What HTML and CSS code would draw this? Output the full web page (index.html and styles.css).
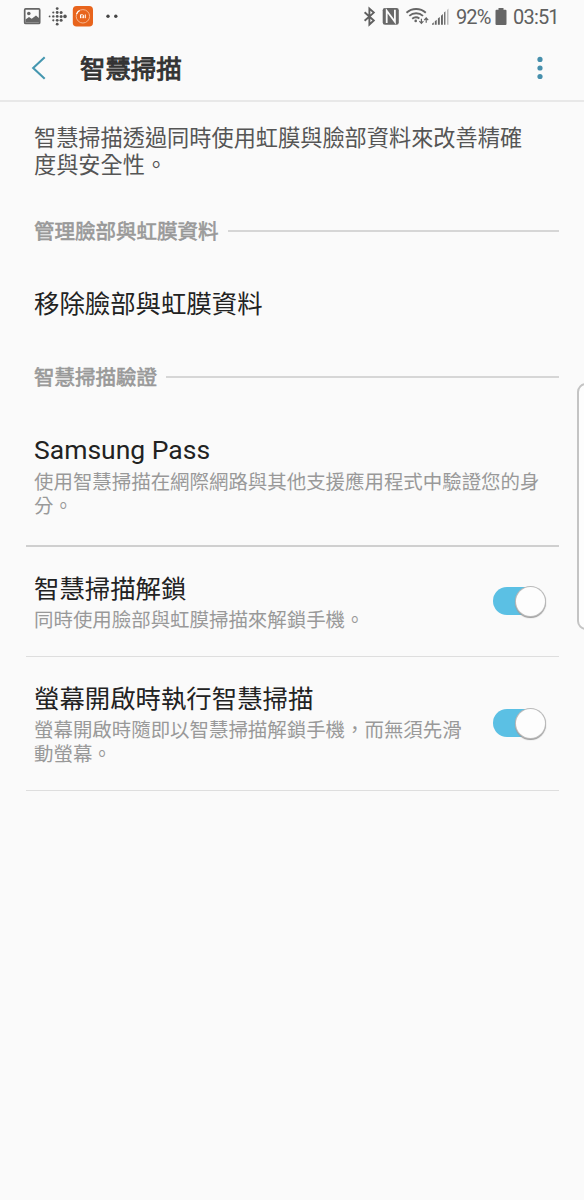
FILE: index.html
```html
<!DOCTYPE html>
<html lang="zh-Hant">
<head>
<meta charset="utf-8">
<title>智慧掃描</title>
<link rel="stylesheet" href="styles.css">
</head>
<body>
<div class="screen">
  <div class="status">
    <div class="status-left">
      <svg class="notifications" width="100" height="34" viewBox="20 0 100 34">
        <rect x="24.7" y="8.9" width="15" height="14.5" rx="1" fill="none" stroke="#666" stroke-width="1.7"/>
        <circle cx="28.8" cy="13.5" r="1.8" fill="#666"/>
        <path d="M25.500 22.500V19.500l3.500-2.500 2.700 1.800 4.300-3.300 3.500 3v4z" fill="#666"/>
        <g fill="#555">
          <circle cx="49.6" cy="16.4" r=".9"/>
          <circle cx="53.3" cy="12.5" r="1.100"/><circle cx="53.3" cy="16.4" r="1.200"/><circle cx="53.3" cy="20.3" r="1.100"/>
          <circle cx="57.2" cy="8.6" r="1.4"/><circle cx="57.2" cy="12.5" r="1.4"/><circle cx="57.2" cy="16.4" r="1.4"/><circle cx="57.2" cy="20.3" r="1.4"/><circle cx="57.2" cy="24.2" r="1.4"/>
          <circle cx="61.1" cy="12.5" r="1.5"/><circle cx="61.1" cy="16.4" r="1.5"/><circle cx="61.1" cy="20.3" r="1.5"/>
          <circle cx="65" cy="16.4" r="1.8"/>
        </g>
        <rect x="72.8" y="6" width="20.2" height="20.6" rx="3.8" fill="#e8641c"/>
        <circle cx="82.9" cy="16.3" r="6.7" fill="none" stroke="#f6b48d" stroke-width="1"/>
        <path d="M76.6 14A6.7 6.7 0 0 1 79.6 10.5" fill="none" stroke="#fff" stroke-width="1.3"/>
        <path d="M80.5 18.2v-3.4h2q1.1 0 1.1 1.1v2.3M82.1 16.3v1.9M85.3 14.5v3.7" fill="none" stroke="#fff" stroke-width="1"/>
        <circle cx="108" cy="16.2" r="1.7" fill="#444"/><circle cx="115.8" cy="16.2" r="1.7" fill="#444"/>
      </svg>
    </div>
    <div class="status-right">
      <svg width="90" height="34" viewBox="360 0 90 34">
        <path d="M364.6 12.300l9.2 8.200-4.400 4V8.600l4.400 4-9.200 8.100" fill="none" stroke="#606060" stroke-width="1.900"/>
        <path d="M385 8h11.500q2.300 0 2.300 2.300v12.200q0 2.300-2.300 2.300H385q-2.300 0-2.300-2.300V10.300Q382.700 8 385 8z" fill="#686868"/>
        <path d="M386.700 23V10.800l8.200 10.900V9.800" fill="none" stroke="#fafafa" stroke-width="1.800"/>
        <g fill="none" stroke="#666" stroke-width="1.900">
          <path d="M406.500 12.700a14.600 14.600 0 0 1 19.300 0"/>
          <path d="M409.300 15.900a10.300 10.300 0 0 1 13.700 0"/>
          <path d="M412.200 18.800a6 6 0 0 1 7.200-.3"/>
        </g>
        <circle cx="415.700" cy="20.900" r="1.300" fill="#666"/>
        <path d="M421.400 18.700v4.500m-2-2l2 2.200 2-2.200M426.200 22.800v-4.600m-2 2l2-2.200 2 2.200" fill="none" stroke="#666" stroke-width="1.200"/>
        <g fill="#666"><path d="M432 24.800v-1.100l1.800-1.500v2.600z"/><path d="M434.800 24.800v-3.500l1.900-1.600v5.100z"/><path d="M437.900 24.800v-6.200l1.900-1.700v7.900z"/><path d="M441 24.800v-9l1.900-1.800v10.800z"/><path d="M444.100 24.800V12.600l1.300-1.300v13.500z"/><path d="M447 24.800V9.900l1.500-1.400v16.300z" fill="#bbb"/></g>
      </svg>
      <span class="battery-text">92%</span>
      <svg class="battery" width="12" height="34" viewBox="0 0 12 34"><path d="M3.500 8h5v1.800h2q1 0 1 1V24q0 1-1 1h-9q-1 0-1-1V10.800q0-1 1-1h2z" fill="#666"/></svg>
      <span class="clock">03:51</span>
    </div>
  </div>
  <div class="header">
    <svg class="back" width="16" height="24" viewBox="0 0 16 24"><path d="M13.700 1.300L2.200 12l11.500 10.700" fill="none" stroke="#4597b0" stroke-width="2.100"/></svg>
    <h1 class="title">智慧掃描</h1>
    <svg class="more" width="8" height="26" viewBox="0 0 8 26"><g fill="#468fac"><circle cx="4" cy="4.400" r="2.600"/><circle cx="4" cy="13" r="2.600"/><circle cx="4" cy="21.500" r="2.600"/></g></svg>
  </div>
  <p class="intro">智慧掃描透過同時使用虹膜與臉部資料來改善精確<br>度與安全性。</p>
  <div class="section"><span>管理臉部與虹膜資料</span></div>
  <div class="row row-remove"><div class="label">移除臉部與虹膜資料</div></div>
  <div class="section"><span>智慧掃描驗證</span></div>
  <div class="row row-pass">
    <div>
      <div class="label latin">Samsung Pass</div>
      <div class="sub">使用智慧掃描在網際網路與其他支援應用程式中驗證您的身<br>分。</div>
    </div>
  </div>
  <div class="row row-unlock">
    <div>
      <div class="label">智慧掃描解鎖</div>
      <div class="sub">同時使用臉部與虹膜掃描來解鎖手機。</div>
    </div>
    <div class="switch"><div class="knob"></div></div>
  </div>
  <div class="row row-screen">
    <div>
      <div class="label">螢幕開啟時執行智慧掃描</div>
      <div class="sub">螢幕開啟時隨即以智慧掃描解鎖手機，而無須先滑<br>動螢幕。</div>
    </div>
    <div class="switch"><div class="knob"></div></div>
  </div>
  <div class="edge-handle"></div>
</div>
</body>
</html>
```

FILE: styles.css
```css
* { box-sizing: border-box; }
body {
  margin: 0;
  background: #fafafa;
  font-family: Roboto, "Noto Sans CJK TC", sans-serif;
}
.screen {
  position: relative;
  width: 584px;
  height: 1200px;
  overflow: hidden;
  background: #fafafa;
}
.status {
  display: flex;
  justify-content: space-between;
  height: 34px;
  padding: 0 26px 0 20px;
  color: #606060;
  font-size: 20px;
  line-height: 35px;
}
.status svg { display: block; }
.status-right { display: flex; }
.battery-text { width: 40px; padding-left: 6px; white-space: nowrap; }
.battery { margin-left: 5px; }
.clock { padding-left: 6px; }
.battery-text { letter-spacing: -0.9px; }
.clock { width: 51px; letter-spacing: -0.8px; white-space: nowrap; }
.header {
  display: flex;
  align-items: center;
  height: 68px;
  padding: 2px 40px 0 31px;
  border-bottom: 2px solid #e8e8e8;
}
.title {
  flex: 1;
  margin: 0 0 0 33px;
  padding-top: 1px;
  color: #333;
  font-size: 25.4px;
  font-weight: 400;
  line-height: 36px;
  -webkit-text-stroke: 0.9px #333;
}
.intro {
  height: 104px;
  margin: 0;
  padding: 23px 0 0 34px;
  color: #555;
  font-size: 22.2px;
  line-height: 27px;
  white-space: nowrap;
}
.section {
  display: flex;
  align-items: center;
  gap: 9px;
  height: 50px;
  padding: 0 25px 0 34px;
  color: #999;
  font-size: 20.5px;
  line-height: 30px;
  -webkit-text-stroke: 0.6px #999;
}
.section span { padding-top: 2px; }
.section::after {
  content: "";
  flex: 1;
  height: 2px;
  background: #d6d6d6;
}
.row {
  display: flex;
  justify-content: space-between;
  margin: 0 25px 0 26px;
  padding: 0 0 0 8px;
  border-bottom: 1px solid #dedede;
  white-space: nowrap;
}
.label {
  color: #222;
  font-size: 25.4px;
  line-height: 34px;
}
.label.latin { font-size: 26.5px; }
.sub {
  padding-top: 3px;
  color: #999;
  font-size: 19.45px;
  line-height: 24px;
}
.row-remove { height: 96px; padding-top: 31px; border: 0; }
.row-pass { height: 145px; padding-top: 31px; border-bottom: 2px solid #cfcfcf; }
.row-unlock { height: 110px; padding-top: 25px; }
.row-screen { height: 134px; padding-top: 25px; }
.row-pass .sub { padding-top: 4px; }
.switch {
  display: flex;
  align-items: center;
  justify-content: flex-end;
  width: 52px;
  height: 28px;
  margin: 15px 14px 0 0;
  border-radius: 14px;
  background: #5bc0e4;
}
.row-screen .switch { margin-top: 27px; }
.knob {
  flex: none;
  width: 29px;
  height: 29px;
  border-radius: 50%;
  background: #fdfdfd;
  box-shadow: 0 0 0 1px #bbb, 0 1px 1px 1px #999;
}
.edge-handle {
  position: absolute;
  left: 577px;
  top: 383px;
  width: 20px;
  height: 247px;
  border: 2px solid #c4c4c4;
  border-radius: 9px;
  background: #fdfdfd;
}
```
